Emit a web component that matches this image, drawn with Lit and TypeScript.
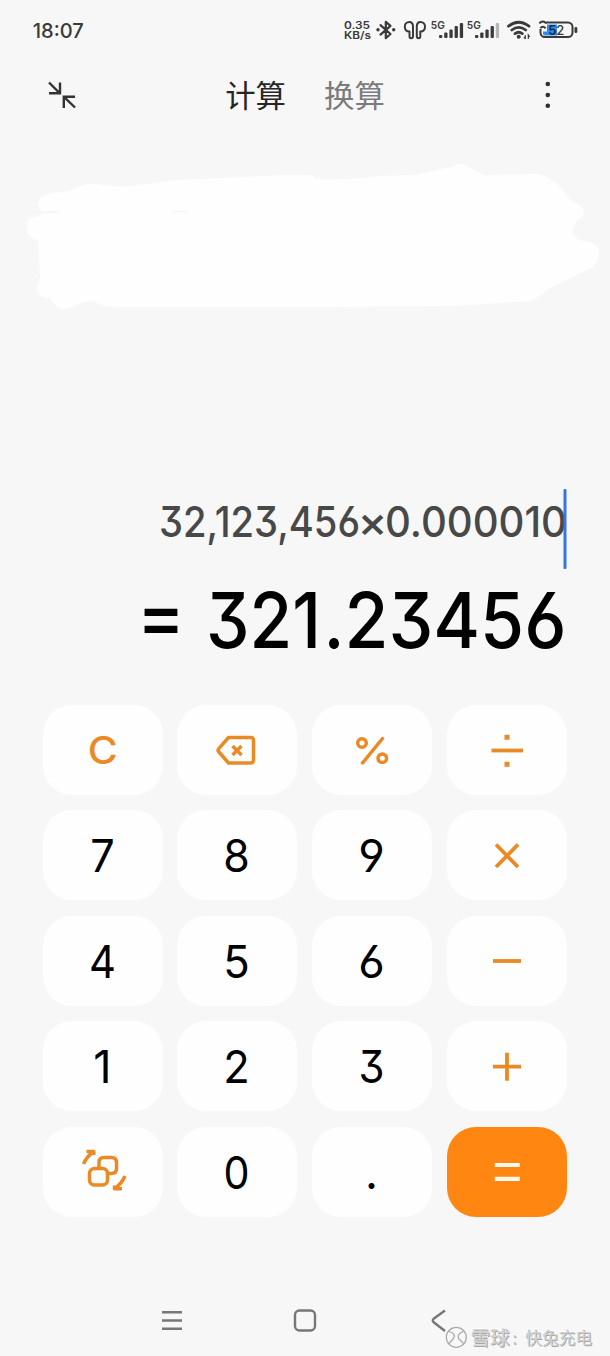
import { LitElement, html, css, svg } from "lit";
import { customElement, property } from "lit/decorators.js";

@customElement("status-bar")
class StatusBar extends LitElement {
  static styles = css`
    :host { display: flex; justify-content: space-between; height: 60px; padding: 0 31px 0 32px; box-sizing: border-box; color: #3a3a3a; }
    svg { display: block; }
    text { font-family: Inter, "Noto Sans", sans-serif; fill: #3a3a3a; }
    .time { font-size: 20.5px; font-weight: 450; }
    .tiny { font-size: 10.4px; font-weight: 600; }
    .gen { font-size: 10.4px; font-weight: 600; }
    .pct { font-size: 13px; font-weight: 500; }
    .pct-on { fill: #14315c; font-weight: 700; }
  `;
  bars(x: number, last: string) {
    return [0, 1, 2, 3, 4].map((i) => svg`<rect x=${x + i * 5.2} y=${[35, 32.5, 29.5, 26, 23][i]} width="3.3"
      height=${[3, 5.5, 8.5, 12, 15][i]} rx="1" fill=${i === 4 ? last : "#3a3a3a"} />`);
  }
  render() {
    return html`
      <svg width="60" height="60"><text class="time" x="0.8" y="37.7" textLength="51" lengthAdjust="spacingAndGlyphs">18:07</text></svg>
      <svg width="239" height="60" viewBox="340 0 239 60" fill="none">
        <text class="tiny" x="344" y="28.7" textLength="26" lengthAdjust="spacingAndGlyphs">0.35</text>
        <text class="tiny" x="344" y="38.5" textLength="27" lengthAdjust="spacingAndGlyphs">KB/s</text>
        <path d="M380.5 25.2 390.5 34 385.8 38.2V21.8L390.5 25.8 380.5 34.6" stroke="#3a3a3a" stroke-width="2.2" stroke-linejoin="round" stroke-linecap="round" />
        <circle cx="378" cy="29.8" r="1.7" fill="#3a3a3a" /><circle cx="393.7" cy="29.8" r="1.7" fill="#3a3a3a" />
        <path d="M409.5 31.5C406 31.5 404.8 29.5 404.8 26.7S406.8 22 409.3 22 413 24 413 26.5V36.3Q413 38.2 411.2 38.2T409.5 36.3ZM420.3 31.5C423.7 31.5 425 29.5 425 26.7S423 22 420.5 22 416.8 24 416.8 26.5V36.3Q416.8 38.2 418.6 38.2T420.3 36.3Z" stroke="#3a3a3a" stroke-width="2" stroke-linejoin="round" />
        <text class="gen" x="430.8" y="29" textLength="14" lengthAdjust="spacingAndGlyphs">5G</text>
        ${this.bars(439, "#3a3a3a")}
        <text class="gen" x="466.8" y="29" textLength="14" lengthAdjust="spacingAndGlyphs">5G</text>
        ${this.bars(475, "#b5b5b5")}
        <g stroke="#3a3a3a" stroke-width="2.8" stroke-linecap="round">
          <path d="M508.5 26.2Q518.5 18.2 529 26.2M511.8 30Q518.7 24.8 525.7 30M515 33.6Q518.7 31 522.3 33.6" />
        </g>
        <circle cx="518.7" cy="36.8" r="2" fill="#3a3a3a" />
        <path d="M525.3 35v4m-1.4-2 1.4 2M528.3 39v-4l1.4 2" stroke="#3a3a3a" stroke-width="1.2" />
        <rect x="540.5" y="22.5" width="32" height="14.5" rx="4.5" stroke="#3a3a3a" stroke-width="2" />
        <path d="M547 24.5H557V35.5H545Q543 35.5 543 33.5V31.5H547Z" fill="#2e8cf0" />
        <rect x="574.5" y="27" width="2.8" height="6" rx="1.3" fill="#3a3a3a" />
        <path d="M538 20V29H546V20Z" fill="#f7f7f7" />
        <path d="M539.3 23.4Q542.8 19.6 546.3 23.4M540.3 28.2Q542.8 25.2 545.6 28.2" stroke="#3a3a3a" stroke-width="2" />
        <text class="pct" x="548.2" y="34.5"><tspan class="pct-on">5</tspan><tspan x="556.3">2</tspan></text>
      </svg>`;
  }
}

@customElement("title-bar")
class TitleBar extends LitElement {
  static styles = css`
    :host { display: grid; grid-template-columns: 1fr auto 1fr; align-items: center; height: 70px; padding: 0 44px 0 46px; box-sizing: border-box; }
    .tabs { display: flex; gap: 38px; padding: 0 2px 3px 0; font: 400 30.4px/44px "Noto Sans CJK SC", sans-serif; color: #262626; }
    .off { color: #7b7b7b; }
    .more { justify-self: end; }
    svg { display: block; }
  `;
  render() {
    return html`
      <svg width="32" height="32" fill="none" stroke="#333" stroke-width="2.4">
        <path d="M3 3.5 13.5 14M14 3.5V14.3H3M29 28.5 18 17.8M17.8 29V17.8H29" />
      </svg>
      <div class="tabs"><span>计算</span><span class="off">换算</span></div>
      <svg class="more" width="36" height="32" fill="#303030">
        <circle cx="17.8" cy="5" r="2.3" /><circle cx="17.8" cy="16" r="2.3" /><circle cx="17.8" cy="26.8" r="2.3" />
      </svg>`;
  }
}

@customElement("calc-display")
class CalcDisplay extends LitElement {
  static styles = css`
    :host { display: block; }
    svg { display: block; }
    text { font-family: Inter, "Noto Sans", sans-serif; font-feature-settings: "cv09", "cv03", "cv04"; }
    .expr { font-size: 42.5px; font-weight: 450; fill: #484848; }
    .result { font-size: 77px; font-weight: 550; fill: #000; }
  `;
  render() {
    return html`
      <svg width="610" height="350" viewBox="0 130 610 350">
        <path fill="#fefefe" d="M38 205Q38 196 48 194L72 190Q82 183 96 184L120 187Q150 184 176 180L245 177 285 175H310L318 179Q350 180 380 176L415 175 433 171 455 166Q462 161 470 168L485 175 540 174Q556 180 565 193L572 202Q583 204 584 213 582 219 577 220L572 232Q574 240 584 241 598 243 599 250 600 262 590 269L548 289Q540 297 530 301L455 306 320 307 120 307 105 306 92 301Q83 301 75 306 66 311 58 308L49 298Q38 298 36 289L40 277 38 240Q27 238 27 230 27 218 31 218L38 216 42 214Z" />
        <path d="M41 212.5 60 211.5M172 211.5H188" stroke="#f5f5f5" stroke-width="1.5" />
      </svg>
      <svg width="610" height="225" viewBox="0 480 610 225">
        <text class="expr" y="537"><tspan x="159" textLength="201" lengthAdjust="spacingAndGlyphs">32,123,456</tspan><tspan x="357.5" textLength="30" lengthAdjust="spacingAndGlyphs">×</tspan><tspan x="385" textLength="182" lengthAdjust="spacingAndGlyphs">0.000010</tspan></text>
        <rect x="563.5" y="489" width="3" height="80" rx="1" fill="#3478df" />
        <text class="result" x="137" y="643" textLength="48" lengthAdjust="spacingAndGlyphs">=</text>
        <text class="result" y="647.5"><tspan x="206" textLength="115" lengthAdjust="spacingAndGlyphs">321</tspan><tspan x="323.5" textLength="21" lengthAdjust="spacingAndGlyphs">.</tspan><tspan x="344.5" textLength="222" lengthAdjust="spacingAndGlyphs">23456</tspan></text>
      </svg>`;
  }
}

const icons: Record<string, unknown> = {
  back: svg`<path d="M51.5 32.5H73.5Q76.5 32.5 76.5 35.5V55Q76.5 58 73.5 58H51.5L41.5 46.5Q40.5 45.2 41.5 44Z" /><path d="M55.5 41 64.5 50M64.5 41 55.5 50" />`,
  percent: svg`<circle cx="50" cy="38" r="4.3" /><circle cx="70.3" cy="53.3" r="4.3" /><path d="M70.5 33.5 50.5 58" stroke-linecap="round" />`,
  div: svg`<path d="M44.5 45.5H76" stroke-width="3.8" /><path d="M57.5 32.2h5M57.5 59.2h5" stroke-width="5" />`,
  mul: svg`<path d="M49 34.5 71 57M71 34.5 49 57" stroke-width="3.8" />`,
  sub: svg`<path d="M46 45H74" stroke-width="3.8" />`,
  add: svg`<path d="M46 45.7H74M60 31.7V59.7" stroke-width="3.8" />`,
  eq: svg`<path d="M47.8 38H72.8M47.8 51.8H72.8" stroke="#fff8ec" stroke-width="4.2" />`,
  swap: svg`<path d="M56 41.5V35.5Q56 30.5 61 30.5H68.5Q73.5 30.5 73.5 35.5V41.5Q73.5 46.5 68.5 46.5H65" /><rect x="46.5" y="41.5" width="18" height="16.5" rx="5" /><path d="M40.5 37Q43.5 30 49.5 25.5M43.5 24.5H50.8V28M82 49Q79 56 73 60.5M79 61.8H71.5V58.5" />`,
};

@customElement("calc-key")
class CalcKey extends LitElement {
  @property() label = "";
  @property() icon = "";
  static styles = css`
    :host { display: block; background: #fefefe; border-radius: 29px; }
    :host([icon="eq"]) { background: #ff8610; }
    svg { display: block; width: 120px; height: 90px; fill: none; stroke: #ea8a26; stroke-width: 3.5; stroke-linejoin: round; }
    text { font: 400 45px Inter, "Noto Sans", sans-serif; font-feature-settings: "cv09", "cv03", "cv04"; fill: #000; stroke: none; text-anchor: middle; }
    .clear { fill: #ea8a26; font-size: 37.5px; font-weight: 500; }
  `;
  render() {
    const clear = this.label === "C";
    const widths: Record<string, number> = { "0": 26, "4": 27, "5": 26.5, "6": 26.5, "7": 24.5, "8": 26.5, "9": 26.5, "2": 26.5, "3": 26 };
    const w = widths[this.label];
    return html`<svg viewBox="0 0 120 90">${this.icon
      ? icons[this.icon]
      : clear
        ? svg`<text class="clear" x="59.8" y="59.4" textLength="30" lengthAdjust="spacingAndGlyphs">C</text>`
        : w
          ? svg`<text x="59.5" y="62" textLength=${w} lengthAdjust="spacingAndGlyphs">${this.label}</text>`
          : svg`<text x="59.5" y="62">${this.label}</text>`}</svg>`;
  }
}

@customElement("nav-bar")
class NavBar extends LitElement {
  static styles = css`
    :host { display: block; }
    svg { display: block; }
    text { font-family: "Noto Sans CJK SC", sans-serif; stroke: none; fill: #d2d2d2; text-shadow: 1px 1px 0 #a8a8a8, -0.6px -0.6px 0 #fff; }
    .brand { font-size: 19.5px; font-weight: 500; }
    .name { font-size: 16.8px; }
  `;
  render() {
    return html`
      <svg width="610" height="66" viewBox="0 1290 610 66" fill="none" stroke="#777" stroke-width="2.4">
        <path d="M162 1312.3H182M162 1320.5H182M162 1328.8H182" />
        <rect x="295" y="1310.5" width="20" height="20" rx="4.5" />
        <path d="M445 1310.5 434 1318.5Q431.5 1320.5 434 1322.5L445 1331" />
        <circle cx="456.3" cy="1337.3" r="10" fill="#f7f7f7" stroke="#aaa" stroke-width="1.3" />
        <path d="M449 1331.5Q457 1334 453 1339L449 1343.5M463.5 1331Q456 1335 459 1339L463.5 1343.5" stroke="#aaa" stroke-width="1.3" />
        <text class="brand" x="470.5" y="1344.5">雪球</text>
        <text class="name" x="512" y="1343.5">:</text>
        <text class="name" x="525" y="1343.5">快兔充电</text>
      </svg>`;
  }
}

@customElement("app-root")
class AppRoot extends LitElement {
  static styles = css`
    :host { display: flex; flex-direction: column; width: 610px; height: 1356px; background: #f7f7f7; overflow: hidden; }
    .keys { display: grid; grid-template-columns: repeat(4, 120px); grid-auto-rows: 90px; gap: 15.4px 14.8px; padding-left: 42.5px; height: 585px; box-sizing: border-box; }
  `;
  render() {
    const keys = ["C", "@back", "@percent", "@div", "7", "8", "9", "@mul", "4", "5", "6", "@sub", "1", "2", "3", "@add", "@swap", "0", ".", "@eq"];
    return html`
      <status-bar></status-bar>
      <title-bar></title-bar>
      <calc-display></calc-display>
      <div class="keys">${keys.map((k) => k[0] === "@"
        ? html`<calc-key icon=${k.slice(1)}></calc-key>`
        : html`<calc-key label=${k}></calc-key>`)}</div>
      <nav-bar></nav-bar>`;
  }
}
